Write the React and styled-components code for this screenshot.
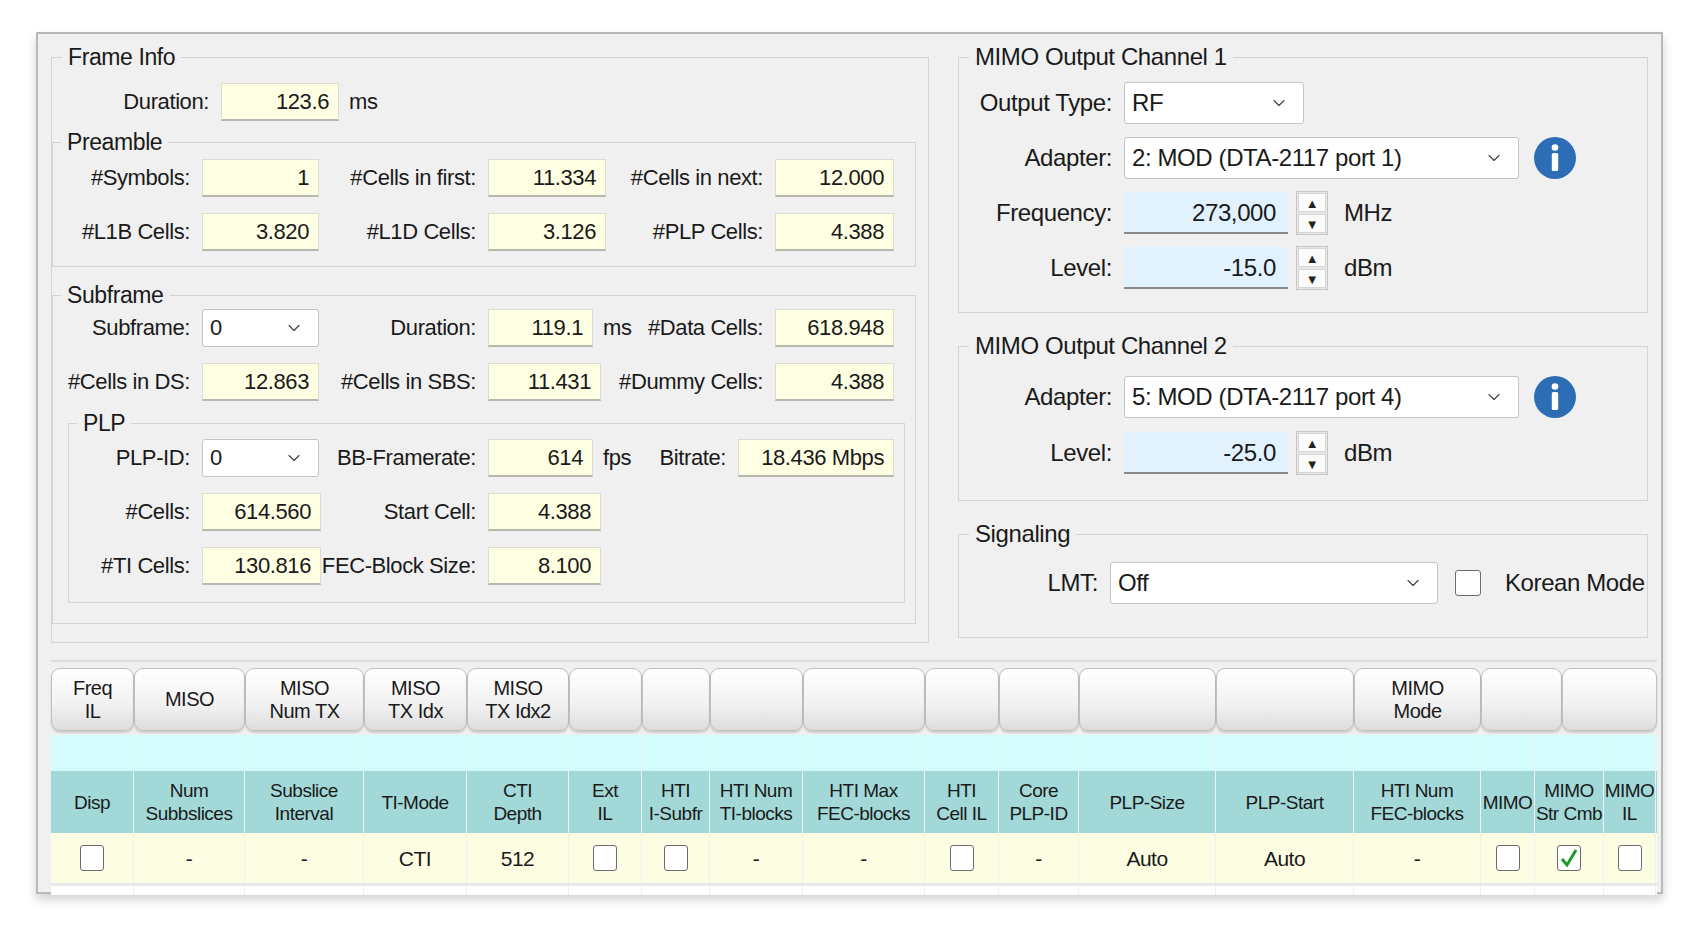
import styled, { createGlobalStyle } from 'styled-components';
import { ChevronDown } from 'lucide-react';

const Global = createGlobalStyle`
	html, body { margin: 0; background: #fff; }
	body {
		font-family: "Liberation Sans", Arial, sans-serif;
		font-size: 22px;
		letter-spacing: -0.4px;
		color: #1a1a1a;
	}
	* { box-sizing: border-box; }
`;

const topCols = [83, 111, 119, 103, 102, 73, 68, 93, 122, 74, 80, 137, 138, 127, 81, 95];
const topLabels = [['Freq', 'IL'], ['MISO'], ['MISO', 'Num TX'], ['MISO', 'TX Idx'], ['MISO', 'TX Idx2'], [], [], [], [], [], [], [], [], ['MIMO', 'Mode'], [], []];
const cols = [83, 111, 119, 103, 102, 73, 68, 93, 122, 74, 80, 137, 138, 127, 54, 69, 52];
const heads = [['Disp'], ['Num', 'Subbslices'], ['Subslice', 'Interval'], ['TI-Mode'], ['CTI', 'Depth'], ['Ext', 'IL'], ['HTI', 'I-Subfr'], ['HTI Num', 'TI-blocks'], ['HTI Max', 'FEC-blocks'], ['HTI', 'Cell IL'], ['Core', 'PLP-ID'], ['PLP-Size'], ['PLP-Start'], ['HTI Num', 'FEC-blocks'], ['MIMO'], ['MIMO', 'Str Cmb'], ['MIMO', 'IL']];
const values = ['box', '-', '-', 'CTI', '512', 'box', 'box', '-', '-', 'box', '-', 'Auto', 'Auto', '-', 'box', 'check', 'box'];

function Field({ label, lw, iw, value, unit, uw, select }) {
	return (
		<>
			<Label $w={lw}>{label}</Label>
			{select ? (
				<Select $w={iw}>
					<span>{value}</span>
					<ChevronDown size={20} strokeWidth={1.4} />
				</Select>
			) : (
				<ReadOnly $w={iw}>{value}</ReadOnly>
			)}
			{unit && <Unit $w={uw}>{unit}</Unit>}
		</>
	);
}

function Spin({ label, value, unit }) {
	return (
		<Row $h={42}>
			<Label $w={165}>{label}</Label>
			<SpinInput>{value}</SpinInput>
			<SpinButtons>
				<SpinBtn>▲</SpinBtn>
				<SpinBtn>▼</SpinBtn>
			</SpinButtons>
			<Unit style={{ marginLeft: 6 }}>{unit}</Unit>
		</Row>
	);
}

function Info() {
	return (
		<svg width="44" height="44" viewBox="0 0 44 44" style={{ marginLeft: 14 }}>
			<circle cx="22" cy="22" r="21" fill="#2c6db5" />
			<circle cx="22" cy="11.5" r="3.3" fill="#fff" />
			<rect x="18.8" y="17" width="6.4" height="18" rx="1.5" fill="#fff" />
		</svg>
	);
}

export default function App() {
	return (
		<Page>
			<Global />
			<Panel>
				<Top>
					<Group $w={878} $gap={0}>
						<legend>Frame Info</legend>
						<Row style={{ marginTop: 12 }}>
							<Field label="Duration:" lw={169} iw={118} value="123.6" unit="ms" />
						</Row>
						<Group $sub $w={864} style={{ marginTop: 7 }}>
							<legend>Preamble</legend>
							<Row style={{ marginTop: 3 }}>
								<Field label="#Symbols:" lw={149} iw={117} value="1" />
								<Field label="#Cells in first:" lw={169} iw={118} value="11.334" />
								<Field label="#Cells in next:" lw={169} iw={119} value="12.000" />
							</Row>
							<Row style={{ marginBottom: 15 }}>
								<Field label="#L1B Cells:" lw={149} iw={117} value="3.820" />
								<Field label="#L1D Cells:" lw={169} iw={118} value="3.126" />
								<Field label="#PLP Cells:" lw={169} iw={119} value="4.388" />
							</Row>
						</Group>
						<Group $sub $w={864} style={{ marginTop: 14, marginBottom: 18 }}>
							<legend>Subframe</legend>
							<Row>
								<Field label="Subframe:" lw={149} iw={117} value="0" select />
								<Field label="Duration:" lw={169} iw={105} value="119.1" unit="ms" uw={40} />
								<Field label="#Data Cells:" lw={142} iw={119} value="618.948" />
							</Row>
							<Row>
								<Field label="#Cells in DS:" lw={149} iw={117} value="12.863" />
								<Field label="#Cells in SBS:" lw={169} iw={113} value="11.431" />
								<Field label="#Dummy Cells:" lw={174} iw={119} value="4.388" />
							</Row>
							<Group $sub $w={837} style={{ margin: '-8px 0 20px 15px' }}>
								<legend>PLP</legend>
								<Row style={{ marginTop: 2 }}>
									<Field label="PLP-ID:" lw={133} iw={117} value="0" select />
									<Field label="BB-Framerate:" lw={169} iw={105} value="614" unit="fps" uw={40} />
									<Field label="Bitrate:" lw={105} iw={156} value="18.436 Mbps" />
								</Row>
								<Row>
									<Field label="#Cells:" lw={133} iw={119} value="614.560" />
									<Field label="Start Cell:" lw={167} iw={113} value="4.388" />
								</Row>
								<Row style={{ marginBottom: 17 }}>
									<Field label="#TI Cells:" lw={133} iw={119} value="130.816" />
									<Field label="FEC-Block Size:" lw={167} iw={113} value="8.100" />
								</Row>
							</Group>
						</Group>
					</Group>
					<RightCol>
						<Group $w={690} $h={270} $gap={13} $right>
							<legend>MIMO Output Channel 1</legend>
							<Row $h={42} style={{ marginTop: 11 }}>
								<Label $w={165}>Output Type:</Label>
								<Select $w={180} $h={42}><span>RF</span><ChevronDown size={20} strokeWidth={1.4} /></Select>
							</Row>
							<Row $h={42}>
								<Label $w={165}>Adapter:</Label>
								<Select $w={395} $h={42}><span>2: MOD (DTA-2117 port 1)</span><ChevronDown size={20} strokeWidth={1.4} /></Select>
								<Info />
							</Row>
							<Spin label="Frequency:" value="273,000" unit="MHz" />
							<Spin label="Level:" value="-15.0" unit="dBm" />
						</Group>
						<Group $w={690} $h={169} $gap={14} $right>
							<legend>MIMO Output Channel 2</legend>
							<Row $h={42} style={{ marginTop: 16 }}>
								<Label $w={165}>Adapter:</Label>
								<Select $w={395} $h={42}><span>5: MOD (DTA-2117 port 4)</span><ChevronDown size={20} strokeWidth={1.4} /></Select>
								<Info />
							</Row>
							<Spin label="Level:" value="-25.0" unit="dBm" />
						</Group>
						<Group $w={690} $h={118} $right>
							<legend>Signaling</legend>
							<Row $h={42} style={{ marginTop: 14 }}>
								<Label $w={151}>LMT:</Label>
								<Select $w={328} $h={42}><span>Off</span><ChevronDown size={20} strokeWidth={1.4} /></Select>
								<Check style={{ marginLeft: 17, width: 26, height: 26 }} />
								<Unit style={{ marginLeft: 14 }}>Korean Mode</Unit>
							</Row>
						</Group>
					</RightCol>
				</Top>
				<Separator />
				<Table>
					<TopRow>
						{topCols.map((w, i) => (
							<HeadButton key={i} $w={w}>
								{topLabels[i].map((t) => <div key={t}>{t}</div>)}
							</HeadButton>
						))}
					</TopRow>
					<TRow $bg="#d4fcfc" $h={36}>
						{cols.map((w, i) => <Cell key={i} $w={w} />)}
					</TRow>
					<TRow $bg="#a2d9d8" $h={62}>
						{cols.map((w, i) => (
							<Cell key={i} $w={w}>
								{heads[i].map((t) => <div key={t}>{t}</div>)}
							</Cell>
						))}
					</TRow>
					<TRow $bg="#fdfde3" $h={50}>
						{cols.map((w, i) => (
							<Cell key={i} $w={w} $big>
								{values[i] === 'box' ? <Check /> : values[i] === 'check' ? (
									<Check>
										<svg width="20" height="22" viewBox="0 0 20 22"><path d="M3 12 L8 18 L17 3" fill="none" stroke="#1b9a2a" strokeWidth="3" /></svg>
									</Check>
								) : values[i]}
							</Cell>
						))}
					</TRow>
					<TRow $bg="#fff" $h={12} $line>
						{cols.map((w, i) => <Cell key={i} $w={w} />)}
					</TRow>
				</Table>
			</Panel>
		</Page>
	);
}

const Page = styled.div`
	padding: 32px 0 0 36px;
	height: 926px;
`;

const Panel = styled.div`
	width: 1627px;
	height: 862px;
	background: #f0f0f0;
	border: 2px solid #b9b9b9;
	box-shadow: 0 6px 10px rgba(0, 0, 0, 0.18);
	padding: 9px 10px 0 13px;
`;

const Top = styled.div`
	display: flex;
	gap: 29px;
	align-items: flex-start;
`;

const RightCol = styled.div`
	display: flex;
	flex-direction: column;
	gap: 19px;
`;

const Group = styled.fieldset`
	margin: 0;
	width: ${(p) => p.$w}px;
	${(p) => (p.$h ? `height: ${p.$h}px;` : '')}
	border: 1px solid #d4d4d4;
	padding: 0;
	display: flex;
	flex-direction: column;
	gap: ${(p) => (p.$gap ?? 16)}px;
	font-size: ${(p) => (p.$right ? 24 : 22)}px;
	legend {
		padding: 0 6px;
		margin-left: ${(p) => (p.$sub ? 8 : 10)}px;
		font-size: ${(p) => (p.$right ? 24 : 23)}px;
		line-height: 28px;
	}
`;

const Row = styled.div`
	display: flex;
	align-items: center;
	height: ${(p) => p.$h || 38}px;
`;

const Label = styled.div`
	width: ${(p) => p.$w}px;
	flex: none;
	text-align: right;
	padding-right: 12px;
	white-space: nowrap;
`;

const ReadOnly = styled.div`
	width: ${(p) => p.$w}px;
	height: 38px;
	flex: none;
	background: #fefee3;
	border: 1px solid #dcdcd0;
	border-bottom: 2px solid #b8b8b0;
	text-align: right;
	padding: 0 9px;
	line-height: 35px;
	white-space: nowrap;
`;

const Select = styled.div`
	width: ${(p) => p.$w}px;
	height: ${(p) => p.$h || 38}px;
	flex: none;
	background: #fff;
	border: 1px solid #c4c4c4;
	border-radius: 3px;
	display: flex;
	align-items: center;
	justify-content: space-between;
	padding: 0 14px 0 7px;
	svg { color: #444; }
`;

const Unit = styled.div`
	${(p) => (p.$w ? `width: ${p.$w}px;` : '')}
	flex: none;
	padding-left: 10px;
	white-space: nowrap;
`;

const SpinInput = styled.div`
	width: 164px;
	height: 42px;
	background: #e1f1fd;
	border-bottom: 2px solid #888;
	text-align: right;
	padding-right: 12px;
	line-height: 42px;
`;

const SpinButtons = styled.div`
	display: flex;
	flex-direction: column;
	gap: 2px;
	margin-left: 8px;
	padding: 1px;
	border: 1px solid #c8c8c8;
	background: #e6e6e6;
`;

const SpinBtn = styled.div`
	width: 28px;
	height: 19px;
	font-size: 13px;
	line-height: 19px;
	text-align: center;
	color: #222;
	background: #fbfbfb;
	border: 1px solid #d6d6d6;
`;

const Check = styled.div`
	width: 24px;
	height: 26px;
	border: 1.5px solid #6c6c6c;
	border-radius: 3px;
	background: #fff;
	display: flex;
	align-items: center;
	justify-content: center;
`;

const Separator = styled.div`
	height: 2px;
	background: #dcdcdc;
	margin: 17px 0 6px 0;
	width: 1606px;
`;

const Table = styled.div`
	width: 1606px;
	font-size: 19px;
	line-height: 23px;
	letter-spacing: -0.5px;
`;

const TopRow = styled.div`
	display: flex;
	height: 63px;
	margin-bottom: 4px;
`;

const HeadButton = styled.div`
	width: ${(p) => p.$w}px;
	flex: none;
	border: 1px solid #c0c0c0;
	border-radius: 9px;
	background: linear-gradient(#ffffff, #f1f1f1 60%, #dcdcdc);
	box-shadow: 0 2px 2px rgba(0, 0, 0, 0.15);
	display: flex;
	flex-direction: column;
	align-items: center;
	justify-content: center;
	text-align: center;
	font-size: 20px;
`;

const TRow = styled.div`
	display: flex;
	height: ${(p) => p.$h}px;
	background: ${(p) => p.$bg};
	${(p) => (p.$line ? 'border-top: 3px solid #e8e8e8;' : '')}
`;

const Cell = styled.div`
	width: ${(p) => p.$w}px;
	flex: none;
	border-right: 1px solid #e8f4f4;
	display: flex;
	flex-direction: column;
	align-items: center;
	justify-content: center;
	text-align: center;
	white-space: nowrap;
	font-size: ${(p) => (p.$big ? 21 : 19)}px;
`;
